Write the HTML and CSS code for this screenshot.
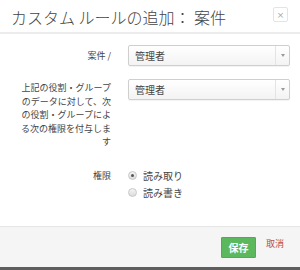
FILE: index.html
```html
<!DOCTYPE html>
<html lang="ja">
<head>
    <meta charset="UTF-8">
    <meta name="viewport" content="width=device-width, initial-scale=1.0">
    <title>カスタム ルールの追加</title>
    <link rel="stylesheet" href="styles.css">
</head>
<body>
    <div class="modal">
        <div class="modal-header">
            <h3 class="modal-title">カスタム ルールの追加： 案件</h3>
            <button class="close" type="button">×</button>
        </div>

        <div class="modal-body">
            <div class="form-row">
                <label class="form-label">案件 /</label>
                <div class="select">
                    <span class="select-value">管理者</span>
                    <span class="select-arrow"></span>
                </div>
            </div>

            <div class="form-row">
                <label class="form-label multiline">上記の役割・グループのデータに対して、次の役割・グループによる次の権限を付与します</label>
                <div class="select">
                    <span class="select-value">管理者</span>
                    <span class="select-arrow"></span>
                </div>
            </div>

            <div class="form-row perm-row">
                <label class="form-label">権限</label>
                <div class="radio-group">
                    <label class="radio"><span class="radio-dot checked"></span>読み取り</label>
                    <label class="radio"><span class="radio-dot"></span>読み書き</label>
                </div>
            </div>
        </div>

        <div class="modal-footer">
            <button class="btn-save" type="button">保存</button>
            <a href="#" class="cancel-link">取消</a>
        </div>
    </div>
</body>
</html>
```

FILE: styles.css
```css
body {
    margin: 0;
    font-family: "Noto Sans CJK JP", "Liberation Sans", sans-serif;
    color: #333;
    background-color: #fff;
}
.modal {
    height: 270px;
    display: flex;
    flex-direction: column;
    border-bottom: 3px solid #5e5e5e;
    box-sizing: border-box;
}
.modal-header {
    height: 32px;
    border-bottom: 2px solid #ececec;
    display: flex;
    align-items: center;
    justify-content: space-between;
    padding: 0 12px 0 11px;
}
.modal-title {
    margin: 0;
    font-size: 16px;
    font-weight: 300;
    color: #444;
    line-height: 1;
    padding-top: 2px;
}
.close {
    width: 15px;
    height: 15px;
    padding: 0;
    border: 1px solid #dfe5ef;
    border-radius: 2px;
    background-color: #fff;
    color: #aaa;
    font-size: 9px;
    line-height: 12px;
    font-family: "DejaVu Sans", sans-serif;
    margin-top: -3px;
}
.modal-body {
    flex: 1;
    padding: 11px 10px 0 15px;
}
.form-row {
    display: flex;
    align-items: flex-start;
    margin-bottom: 13px;
}
.form-label {
    width: 96px;
    flex-shrink: 0;
    text-align: right;
    font-size: 9px;
    line-height: 21px;
    color: #444;
    margin-right: 17px;
}
.form-label.multiline {
    line-height: 13.5px;
    padding-top: 2px;
}
.select {
    flex: 1;
    height: 21px;
    box-sizing: border-box;
    border: 1px solid #cfcfcf;
    border-radius: 2px;
    background: linear-gradient(#ffffff, #f3f3f3);
    box-shadow: 0 1px 1px rgba(0,0,0,0.05);
    display: flex;
    align-items: center;
    font-size: 10px;
    color: #444;
}
.select-value {
    flex: 1;
    padding-left: 6px;
}
.select-arrow {
    width: 13px;
    height: 100%;
    border-left: 1px solid #e4e4e4;
    display: flex;
    align-items: center;
    justify-content: center;
}
.select-arrow::after {
    content: "";
    border-left: 2px solid transparent;
    border-right: 2px solid transparent;
    border-top: 3px solid #999;
}
.perm-row {
    margin-top: 18px;
}
.perm-row .form-label {
    line-height: 17.5px;
}
.radio-group {
    display: flex;
    flex-direction: column;
}
.radio {
    display: flex;
    align-items: center;
    height: 17.5px;
    font-size: 10px;
    color: #444;
}
.radio-dot {
    width: 9px;
    height: 9px;
    box-sizing: border-box;
    border: 1px solid #c8c8c8;
    border-radius: 50%;
    background: linear-gradient(#f4f4f4, #dcdcdc);
    margin-right: 6px;
    display: flex;
    align-items: center;
    justify-content: center;
}
.radio-dot.checked::after {
    content: "";
    width: 3px;
    height: 3px;
    border-radius: 50%;
    background-color: #555;
}
.modal-footer {
    height: 41px;
    box-sizing: border-box;
    border-top: 1px solid #e5e5e5;
    background-color: #f5f5f5;
    display: flex;
    justify-content: flex-end;
    align-items: flex-start;
    padding: 10px 16px 0 0;
}
.btn-save {
    width: 35px;
    height: 21px;
    padding: 0;
    border: 1px solid #4cae4c;
    border-radius: 1px;
    background-color: #5cb85c;
    color: #fff;
    font-family: inherit;
    font-size: 10px;
    font-weight: bold;
}
.cancel-link {
    margin-left: 10px;
    margin-top: 1px;
    font-size: 9px;
    line-height: 11px;
    color: #b94a48;
    text-decoration: none;
}
```
